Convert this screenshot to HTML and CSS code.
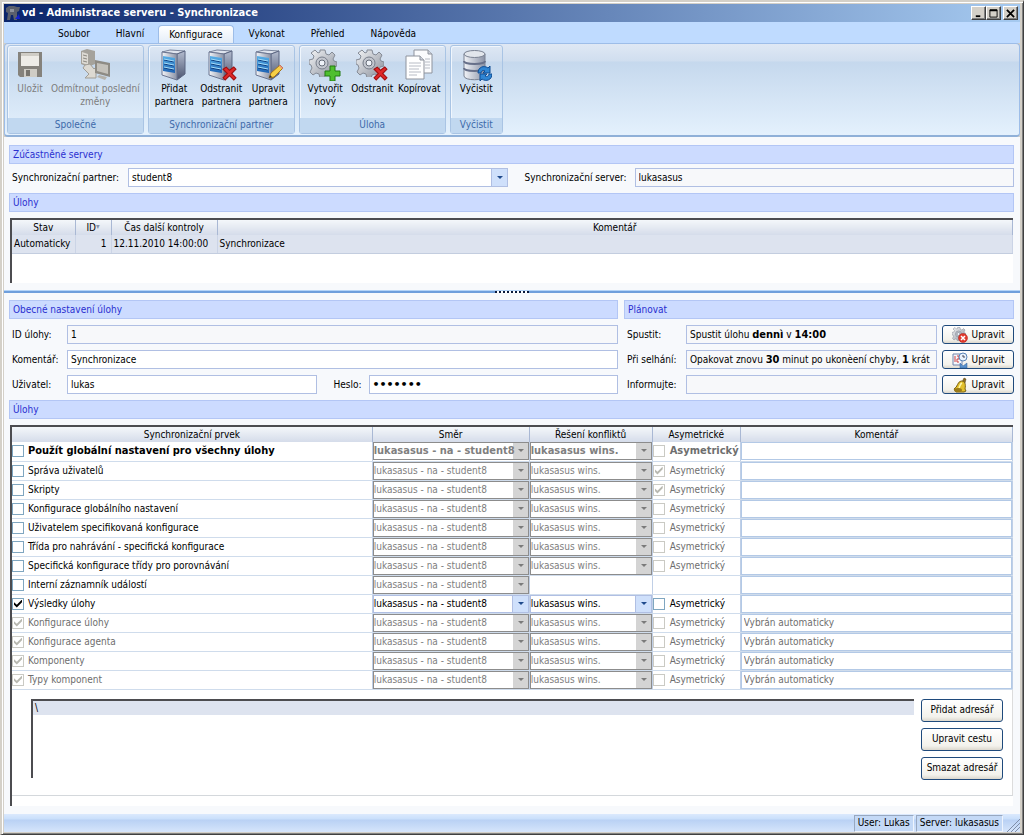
FILE: index.html
```html
<!DOCTYPE html>
<html lang="cs">
<head>
<meta charset="utf-8">
<title>vd - Administrace serveru - Synchronizace</title>
<link rel="stylesheet" href="styles.css">
</head>
<body>
<svg class="defs" aria-hidden="true">
  <defs>
    <linearGradient id="g-metal" x1="0" y1="0" x2="1" y2="0"><stop offset="0" stop-color="#f2f4f8"/><stop offset="1" stop-color="#8a92a6"/></linearGradient>
    <linearGradient id="g-blue" x1="0" y1="0" x2="0" y2="1"><stop offset="0" stop-color="#58b0e8"/><stop offset="1" stop-color="#1c62b4"/></linearGradient>
    <linearGradient id="g-side" x1="0" y1="0" x2="0" y2="1"><stop offset="0" stop-color="#b4bccf"/><stop offset="1" stop-color="#4a5470"/></linearGradient>
    <linearGradient id="g-gear" x1="0" y1="0" x2="1" y2="1"><stop offset="0" stop-color="#f4f5f7"/><stop offset="1" stop-color="#868c98"/></linearGradient>
    <symbol id="server" viewBox="0 0 32 32">
      <path d="M4 3 12 1 27 2 19 5z" fill="#dfe4ee" stroke="#7a849c"/>
      <path d="M19 5 27 2V25L19 31z" fill="url(#g-side)" stroke="#5a6480"/>
      <path d="M4 3 19 5V31L4 26z" fill="url(#g-metal)" stroke="#6b7590"/>
      <path d="M5 7 17 9V24L5 22z" fill="url(#g-blue)"/>
      <path d="M6 11 16 13M6 15 16 17M6 19 16 21" stroke="#123f80"/>
      <path d="M6 10 16 12M6 14 16 16M6 18 16 20" stroke="#a4dcf8"/>
    </symbol>
    <symbol id="cross" viewBox="0 0 14 14"><path d="M1 3 4 1 7 4 11 1 13 3 9 7 13 11 11 13 7 9 3 13 1 11 5 7z" fill="#e02828" stroke="#a01010"/></symbol>
    <symbol id="gear" viewBox="0 0 28 28">
      <path d="M11 1h5l1 4 3 1 3-3 3 3-2 4 1 2 3 1v4l-4 1-1 3 3 3-4 3-3-2-3 1-1 3H11l-1-4-3-1-3 2-3-3 2-4-1-3-2-1v-4l4-1 1-3-3-3 4-3 3 3 2-1z" fill="url(#g-gear)" stroke="#858b96"/>
      <circle cx="13" cy="14" r="6" fill="#c3c7cf" stroke="#777d8a"/>
      <circle cx="13" cy="14" r="3" fill="#eef2f8" stroke="#666c78"/>
    </symbol>
  </defs>
</svg>

<div class="window">
  <header class="titlebar">
    <svg class="app-icon" viewBox="0 0 16 16" aria-hidden="true"><path d="M1 3 4 1H9l3 1h3l-1 4-2 1v8H9l-1-5H6l-1 5H2L3 8 1 7z" fill="#5a5f6c"/><path d="M5 4h4v3H5z" fill="#8d929c"/><path d="M10 14 14 9 15 14z" fill="#1420d0"/></svg>
    <h1>vd - Administrace serveru - Synchronizace</h1>
    <div class="window-buttons">
      <button type="button" aria-label="Minimalizovat"><svg viewBox="0 0 10 10"><path d="M2 8h5" stroke="#000" stroke-width="2"/></svg></button>
      <button type="button" aria-label="Maximalizovat"><svg viewBox="0 0 10 10"><path d="M1 1h8v8H1z" fill="none" stroke="#000" stroke-width="1"/><path d="M1 1.500h8" stroke="#000" stroke-width="2"/></svg></button>
      <button type="button" class="close" aria-label="Zavřít"><svg viewBox="0 0 10 10"><path d="M1 1 9 9M9 1 1 9" stroke="#000" stroke-width="2"/></svg></button>
    </div>
  </header>

  <nav class="tabs">
    <button type="button">Soubor</button>
    <button type="button">Hlavní</button>
    <button type="button" class="active">Konfigurace</button>
    <button type="button">Vykonat</button>
    <button type="button">Přehled</button>
    <button type="button">Nápověda</button>
  </nav>

  <div class="ribbon">
    <section class="group wide">
      <div class="tools">
        <button type="button" disabled>
          <svg viewBox="0 0 32 32"><path d="M4 3h24v25H6l-2-2z" fill="#85827c"/><path d="M7 4h18v13H7z" fill="#eeece7"/><path d="M7 4h18v3H7z" fill="#d0cdc6"/><path d="M10 20h13v8H10z" fill="#cfccc5"/><path d="M12 21h4v6h-4z" fill="#77746e"/></svg>
          Uložit</button>
        <button type="button" disabled>
          <svg viewBox="0 0 32 32"><path d="M2 2 8 0 16 2V15L9 18 2 15z" fill="#a5a29b"/><path d="M3 3 9 5V16L3 14z" fill="#dddad3"/><path d="M4 6l4 1M4 9l4 1M4 12l4 1" stroke="#8c8982"/><path d="M6 16 11 15 15 20 17 18V29L6 29 10 25 4 19z" fill="#dcd9d2" stroke="#a09d96"/><path d="M16 11 31 14V28L16 24z" fill="#8e8b84"/><path d="M18 14 29 16V25L18 22z" fill="#c4c1ba"/><path d="M20 26l8 2-2 3-8-3z" fill="#b5b2ab"/></svg>
          Odmítnout poslední<br>změny</button>
      </div>
      <h2>Společné</h2>
    </section>
    <section class="group">
      <div class="tools">
        <button type="button"><svg viewBox="0 0 32 32"><use href="#server"/></svg>Přidat<br>partnera</button>
        <button type="button"><svg viewBox="0 0 32 32"><use href="#server"/><use href="#cross" x="17" y="17" width="15" height="15"/></svg>Odstranit<br>partnera</button>
        <button type="button"><svg viewBox="0 0 32 32"><use href="#server"/><path d="M17 29 19 24 28 16 31 19 22 28z" fill="#f6cf45" stroke="#a4731c"/><path d="M28 16 31 19 30 20 27 17z" fill="#e88c8c"/><path d="M17 29l1-3 2 2z" fill="#333"/></svg>Upravit<br>partnera</button>
      </div>
      <h2>Synchronizační partner</h2>
    </section>
    <section class="group">
      <div class="tools">
        <button type="button"><svg viewBox="0 0 32 32"><use href="#gear" width="28" height="28"/><path d="M21 17h5v5h5v5h-5v5h-5v-5h-5v-5h5z" fill="#4fbf2e" stroke="#237a10"/></svg>Vytvořit<br>nový</button>
        <button type="button"><svg viewBox="0 0 32 32"><use href="#gear" width="28" height="28"/><use href="#cross" x="17" y="17" width="15" height="15"/></svg>Odstranit</button>
        <button type="button"><svg viewBox="0 0 32 32"><path d="M11 1H25L29 5V24H11z" fill="#fafbfd" stroke="#8e939d"/><path d="M25 1v4h4" fill="#cdd2dc" stroke="#8e939d"/><path d="M22 10h5M22 13h5M22 16h5M22 19h5" stroke="#b8bcc5"/><path d="M3 7H17L21 11V30H3z" fill="#fff" stroke="#8e939d"/><path d="M17 7v4h4" fill="#cdd2dc" stroke="#8e939d"/><path d="M6 14h12M6 17h12M6 20h10M6 23h12M6 26h8" stroke="#b8bcc5"/></svg>Kopírovat</button>
      </div>
      <h2>Úloha</h2>
    </section>
    <section class="group">
      <div class="tools">
        <button type="button"><svg viewBox="0 0 32 32"><path d="M4 5v22c0 5 21 5 21 0V5z" fill="url(#g-metal)" stroke="#7a8292"/><ellipse cx="14.500" cy="5" rx="10.500" ry="3.500" fill="#e2e6ec" stroke="#7a8292"/><path d="M4 12c0 4 21 4 21 0M4 19c0 4 21 4 21 0" fill="none" stroke="#67708a" stroke-width="2"/><path d="M18 24c0-6 6-8 10-5l2-2v7h-7l2-2c-2-1-4 0-4 2zM32 25c0 6-6 8-10 5l-2 2v-7h7l-2 2c2 1 4 0 4-2z" fill="#2f86d4" stroke="#0f4c94"/></svg>Vyčistit</button>
      </div>
      <h2>Vyčistit</h2>
    </section>
  </div>

  <main>
    <section class="pane top-pane">
      <h3 class="bar">Zúčastněné servery</h3>
      <div class="servers">
        <label for="partner">Synchronizační partner:</label>
        <span class="combo"><select id="partner"><option>student8</option></select></span>
        <label for="server-name" class="second">Synchronizační server:</label>
        <input id="server-name" type="text" readonly value="lukasasus">
      </div>
      <h3 class="bar">Úlohy</h3>
      <div class="sunken jobs">
        <table>
          <colgroup><col class="c-state"><col class="c-id"><col class="c-time"><col></colgroup>
          <thead><tr><th>Stav</th><th>ID<span class="sort">▾</span></th><th>Čas další kontroly</th><th>Komentář</th></tr></thead>
          <tbody><tr><td>Automaticky</td><td class="num">1</td><td>12.11.2010 14:00:00</td><td>Synchronizace</td></tr></tbody>
        </table>
      </div>
    </section>

    <div class="splitter"><span></span></div>

    <section class="pane bottom-pane">
      <div class="halves">
        <div>
          <h3 class="bar">Obecné nastavení úlohy</h3>
          <div class="general">
            <label for="job-id">ID úlohy:</label><input id="job-id" class="span" type="text" readonly value="1">
            <label for="comment">Komentář:</label><input id="comment" class="span" type="text" value="Synchronizace">
            <label for="user">Uživatel:</label><input id="user" type="text" value="lukas">
            <label for="password" class="pw">Heslo:</label><input id="password" type="password" value="heslo12">
          </div>
        </div>
        <div>
          <h3 class="bar">Plánovat</h3>
          <div class="plan">
            <label for="run">Spustit:</label><output id="run">Spustit úlohu <b>dennì</b> v <b>14:00</b></output>
            <button type="button" class="push"><svg viewBox="0 0 16 16"><use href="#gear" width="14" height="14"/><circle cx="11" cy="11" r="4.500" fill="#e23a2e" stroke="#a81a12" stroke-width=".5"/><path d="M9 9l4 4M13 9l-4 4" stroke="#fff" stroke-width="1.500"/></svg>Upravit</button>
            <label for="fail">Při selhání:</label><output id="fail">Opakovat znovu <b>30</b> minut po ukonèení chyby, <b>1</b> krát</output>
            <button type="button" class="push"><svg viewBox="0 0 16 16"><path d="M1 2h9v11H1z" fill="#f4f6fb" stroke="#7084ac"/><path d="M3 4v6M5 4h2v3H5v3h2" fill="none" stroke="#d04040"/><circle cx="11" cy="5" r="4" fill="#e8f2fc" stroke="#5a84b8"/><path d="M11 3v2h2" fill="none" stroke="#445"/><path d="M8 11l3 3 4-3v5H8z" fill="#5b92cc" stroke="#2f5f9c" stroke-width=".5"/></svg>Upravit</button>
            <label for="inform">Informujte:</label><output id="inform"></output>
            <button type="button" class="push"><svg viewBox="0 0 16 16"><path d="M10 5 12 1l2 1-1 4z" fill="#8a6a20" stroke="#4e3c10" stroke-width=".5"/><path d="M2 12C6 10 5 5 9 4c4 0 5 3 4 8l1 2-2 1H4z" fill="#e2c02c" stroke="#7a6010"/><path d="M7 11c1-2 1-4 3-5" fill="none" stroke="#fff6a8" stroke-width="1.500"/><ellipse cx="6" cy="13" rx="4" ry="2" fill="#9a7a18"/></svg>Upravit</button>
          </div>
        </div>
      </div>

      <h3 class="bar">Úlohy</h3>
      <div class="sunken tasks">
        <table>
          <colgroup><col class="c-item"><col class="c-dir"><col class="c-conf"><col class="c-asym"><col></colgroup>
          <thead><tr><th>Synchronizační prvek</th><th>Směr</th><th>Řešení konfliktů</th><th>Asymetrické</th><th>Komentář</th></tr></thead>
          <tbody>
            <tr class="strong"><td><label><input type="checkbox">Použít globální nastavení pro všechny úlohy</label></td><td><span class="combo"><select disabled aria-label="Směr"><option>lukasasus - na - student8</option></select></span></td><td><span class="combo"><select disabled aria-label="Řešení"><option>lukasasus wins.</option></select></span></td><td><label class="off"><input type="checkbox" disabled>Asymetrický</label></td><td><input type="text" aria-label="Komentář"></td></tr>
            <tr><td><label><input type="checkbox">Správa uživatelů</label></td><td><span class="combo"><select disabled aria-label="Směr"><option>lukasasus - na - student8</option></select></span></td><td><span class="combo"><select disabled aria-label="Řešení"><option>lukasasus wins.</option></select></span></td><td><label class="off"><input type="checkbox" disabled checked>Asymetrický</label></td><td><input type="text" aria-label="Komentář"></td></tr>
            <tr><td><label><input type="checkbox">Skripty</label></td><td><span class="combo"><select disabled aria-label="Směr"><option>lukasasus - na - student8</option></select></span></td><td><span class="combo"><select disabled aria-label="Řešení"><option>lukasasus wins.</option></select></span></td><td><label class="off"><input type="checkbox" disabled checked>Asymetrický</label></td><td><input type="text" aria-label="Komentář"></td></tr>
            <tr><td><label><input type="checkbox">Konfigurace globálního nastavení</label></td><td><span class="combo"><select disabled aria-label="Směr"><option>lukasasus - na - student8</option></select></span></td><td><span class="combo"><select disabled aria-label="Řešení"><option>lukasasus wins.</option></select></span></td><td><label class="off"><input type="checkbox" disabled>Asymetrický</label></td><td><input type="text" aria-label="Komentář"></td></tr>
            <tr><td><label><input type="checkbox">Uživatelem specifikovaná konfigurace</label></td><td><span class="combo"><select disabled aria-label="Směr"><option>lukasasus - na - student8</option></select></span></td><td><span class="combo"><select disabled aria-label="Řešení"><option>lukasasus wins.</option></select></span></td><td><label class="off"><input type="checkbox" disabled>Asymetrický</label></td><td><input type="text" aria-label="Komentář"></td></tr>
            <tr><td><label><input type="checkbox">Třída pro nahrávání - specifická konfigurace</label></td><td><span class="combo"><select disabled aria-label="Směr"><option>lukasasus - na - student8</option></select></span></td><td><span class="combo"><select disabled aria-label="Řešení"><option>lukasasus wins.</option></select></span></td><td><label class="off"><input type="checkbox" disabled>Asymetrický</label></td><td><input type="text" aria-label="Komentář"></td></tr>
            <tr><td><label><input type="checkbox">Specifická konfigurace třídy pro porovnávání</label></td><td><span class="combo"><select disabled aria-label="Směr"><option>lukasasus - na - student8</option></select></span></td><td><span class="combo"><select disabled aria-label="Řešení"><option>lukasasus wins.</option></select></span></td><td><label class="off"><input type="checkbox" disabled>Asymetrický</label></td><td><input type="text" aria-label="Komentář"></td></tr>
            <tr><td><label><input type="checkbox">Interní záznamník událostí</label></td><td><span class="combo"><select disabled aria-label="Směr"><option>lukasasus - na - student8</option></select></span></td><td></td><td></td><td><input type="text" aria-label="Komentář"></td></tr>
            <tr><td><label><input type="checkbox" checked>Výsledky úlohy</label></td><td><span class="combo"><select aria-label="Směr"><option>lukasasus - na - student8</option></select></span></td><td><span class="combo"><select aria-label="Řešení"><option>lukasasus wins.</option></select></span></td><td><label><input type="checkbox">Asymetrický</label></td><td><input type="text" aria-label="Komentář"></td></tr>
            <tr class="auto"><td><label><input type="checkbox" disabled checked>Konfigurace úlohy</label></td><td><span class="combo"><select disabled aria-label="Směr"><option>lukasasus - na - student8</option></select></span></td><td><span class="combo"><select disabled aria-label="Řešení"><option>lukasasus wins.</option></select></span></td><td><label><input type="checkbox" disabled>Asymetrický</label></td><td><input type="text" aria-label="Komentář" value="Vybrán automaticky"></td></tr>
            <tr class="auto"><td><label><input type="checkbox" disabled checked>Konfigurace agenta</label></td><td><span class="combo"><select disabled aria-label="Směr"><option>lukasasus - na - student8</option></select></span></td><td><span class="combo"><select disabled aria-label="Řešení"><option>lukasasus wins.</option></select></span></td><td><label><input type="checkbox" disabled>Asymetrický</label></td><td><input type="text" aria-label="Komentář" value="Vybrán automaticky"></td></tr>
            <tr class="auto"><td><label><input type="checkbox" disabled checked>Komponenty</label></td><td><span class="combo"><select disabled aria-label="Směr"><option>lukasasus - na - student8</option></select></span></td><td><span class="combo"><select disabled aria-label="Řešení"><option>lukasasus wins.</option></select></span></td><td><label><input type="checkbox" disabled>Asymetrický</label></td><td><input type="text" aria-label="Komentář" value="Vybrán automaticky"></td></tr>
            <tr class="auto"><td><label><input type="checkbox" disabled checked>Typy komponent</label></td><td><span class="combo"><select disabled aria-label="Směr"><option>lukasasus - na - student8</option></select></span></td><td><span class="combo"><select disabled aria-label="Řešení"><option>lukasasus wins.</option></select></span></td><td><label><input type="checkbox" disabled>Asymetrický</label></td><td><input type="text" aria-label="Komentář" value="Vybrán automaticky"></td></tr>
          </tbody>
        </table>
        <div class="paths">
          <ul class="path-list"><li>\</li></ul>
          <div class="path-buttons">
            <button type="button" class="push">Přidat adresář</button>
            <button type="button" class="push">Upravit cestu</button>
            <button type="button" class="push">Smazat adresář</button>
          </div>
        </div>
      </div>
    </section>
  </main>

  <footer class="statusbar">
    <span>User: Lukas</span><span>Server: lukasasus</span>
    <svg viewBox="0 0 14 14" aria-hidden="true"><path d="M1 14 14 1M5 14 14 5M9 14 14 9" stroke="#7f8ea8" stroke-width="1"/></svg>
  </footer>
</div>
</body>
</html>
```
FILE: styles.css
```css
* { box-sizing: border-box; }

body {
  margin: 0;
  font: 10px/14px "DejaVu Sans Condensed", "Noto Sans", sans-serif;
  color: #000;
}

button, input, select, output { font: inherit; color: inherit; }
h1, h2, h3, ul { margin: 0; padding: 0; font: inherit; }
.defs { position: absolute; width: 0; height: 0; }

b, .strong, .titlebar h1 { font-size: 11px; font-weight: bold; }

.window {
  display: flex;
  flex-direction: column;
  min-height: 100vh;
  padding: 2px 3px 2px 2px;
  background: #d4d0c8;
  border: 1px solid #d4d0c8;
  border-right-color: #404040;
  border-bottom-color: #404040;
  box-shadow: inset 1px 1px #fff, inset -1px -1px #808080;
  border-left-width: 2px;
  border-top-width: 2px;
}

/* Title bar */
.titlebar {
  display: flex;
  align-items: center;
  height: 18px;
  padding: 0 2px 0 1px;
  background: linear-gradient(90deg, #0a246a, #a6caf0);
  color: #fff;
}
.app-icon { width: 16px; height: 16px; }
.titlebar h1 { flex: 1; margin-left: 1px; }
.window-buttons { display: flex; }
.window-buttons button {
  display: grid;
  place-items: center;
  width: 15px;
  height: 14px;
  padding: 0;
  background: #d4d0c8;
  border: 1px solid;
  border-color: #fff #404040 #404040 #fff;
  box-shadow: inset -1px -1px #808080;
}
.window-buttons .close { margin-left: 2px; }
.window-buttons svg { width: 9px; height: 9px; }

/* Ribbon */
.tabs {
  display: flex;
  align-items: flex-end;
  height: 21px;
  padding-left: 41px;
  background: #bfdbff;
}
.tabs button {
  height: 18px;
  padding: 0 12px;
  background: none;
  border: 1px solid transparent;
  border-radius: 4px 4px 0 0;
}
.tabs .active {
  margin: 0 2px 0 1px;
  padding: 0 10px;
  background: linear-gradient(#fff, #e4edf8);
  border-color: #9dbde8;
  border-bottom: 0;
}

.ribbon {
  display: flex;
  gap: 4px;
  padding: 1px 2px;
  background: linear-gradient(#dfe8f4, #d0deef 17px, #c5d8ed 18px, #e4f1fd);
  border: 1px solid #9dbde8;
  border-bottom: 2px solid #8fb0d8;
  border-radius: 4px;
}
.group {
  display: flex;
  flex-direction: column;
  border: 1px solid #a9c4e4;
  border-radius: 3px;
  box-shadow: inset 1px 1px #f0f6fd;
}
.group h2 {
  height: 15px;
  background: #c1d8f0;
  color: #3e6aaa;
  text-align: center;
}
.tools {
  display: flex;
  align-items: flex-start;
  height: 72px;
  padding: 3px 2px 0;
}
.tools button {
  padding: 0 1px;
  min-width: 47px;
  background: none;
  border: 0;
  line-height: 13px;
}
.tools button:disabled { color: #7d7d7d; }
.tools svg { display: block; width: 32px; height: 32px; margin: 0 auto 1px; }
.wide .tools button:first-child { min-width: 40px; }

/* Content */
main {
  flex: 1;
  display: flex;
  flex-direction: column;
  background: #f7f9fc;
}
.pane { display: flex; flex-direction: column; padding: 0 6px 0 5px; }
.top-pane { padding-top: 8px; }
.bottom-pane { flex: 1; padding-top: 7px; padding-bottom: 8px; }

.bar {
  height: 19px;
  padding: 1px 3px;
  line-height: 16px;
  background: #ccdbff;
  border: 1px solid #b3c6f5;
  color: #2a2fd0;
}

input[type="text"], input[type="password"], output, .combo select {
  display: block;
  width: 100%;
  min-width: 0;
  height: 19px;
  margin: 0;
  padding: 0 3px;
  background: #fff;
  border: 1px solid #b0bfe3;
  border-radius: 0;
  outline: 0;
  line-height: 17px;
  white-space: nowrap;
  overflow: hidden;
}
input[readonly], output { background: #f7f8fa !important; }
input[type="password"] { font-family: "DejaVu Sans", sans-serif; font-size: 11px; font-weight: bold; }

.combo { position: relative; display: block; width: 100%; min-width: 0; }
.combo select {
  appearance: none;
  opacity: 1;
  background: linear-gradient(90deg, #b0bfe3 1px, #cfe0fb 1px) right / 16px 100% no-repeat #fff;
}
.combo::after {
  content: "";
  position: absolute;
  right: 5px;
  top: 8px;
  border: 3px solid transparent;
  border-top-color: #1f4a8c;
  border-bottom: 0;
  pointer-events: none;
}

.servers {
  display: grid;
  grid-template-columns: 116px 1fr 127px 1fr;
  align-items: center;
  margin: 4px 0 6px;
  padding-left: 3px;
}
.servers .second { padding-left: 17px; }
.servers label, .general label, .plan label { white-space: nowrap; }

.sunken {
  margin: 6px 1px 0;
  background: #fff;
  border-top: 2px solid #4c4c50;
  border-left: 2px solid #4c4c50;
}
.jobs { height: 65px; }

table { width: 100%; table-layout: fixed; border-collapse: collapse; }
th {
  padding: 0;
  height: 15px;
  font-weight: normal;
  background: linear-gradient(#f4f7fa, #d5dcea);
  border-right: 1px solid #a9b8d4;
}
td { padding: 0 2px; white-space: nowrap; }
.jobs td { height: 18px; background: #dde3ef; border-right: 1px solid #cbd4e6; border-bottom: 1px solid #c3cddf; }
.jobs .num { text-align: right; padding-right: 4px; }
.sort { color: #8a93a6; font-size: 8px; vertical-align: 2px; line-height: 1px; }
.c-state { width: 63px; }
.c-id { width: 36px; }
.c-time { width: 106px; }

.splitter {
  display: flex;
  justify-content: center;
  align-items: center;
  height: 3px;
  margin-top: 7px;
  background: #6f9fdc;
  border-top: 1px solid #b4d4f8;
}
.splitter span { width: 34px; height: 2px; background: repeating-linear-gradient(90deg, #0a1a3c 0 2px, #fff 2px 4px); }

/* Job details */
.halves {
  display: grid;
  grid-template-columns: minmax(0, 609fr) minmax(0, 390fr);
  gap: 6px;
  margin-bottom: 6px;
}
.general, .plan {
  display: grid;
  align-items: center;
  gap: 6px 0;
  margin-top: 6px;
  padding-left: 3px;
}
.general { grid-template-columns: 55px 1fr 52px 1fr; }
.general .span { grid-column: 2 / -1; }
.general .pw { padding-left: 17px; }
.plan { grid-template-columns: 59px minmax(0, 1fr) 77px; }

.push {
  display: flex;
  align-items: center;
  justify-content: center;
  gap: 4px;
  padding: 0;
  background: linear-gradient(#fff, #f3f2ec 80%, #dcd8ce);
  border: 1px solid #1f4a7c;
  border-radius: 3px;
  white-space: nowrap;
}
.plan .push { height: 19px; margin-left: 5px; }
.push svg { width: 16px; height: 16px; }

/* Task table */
.tasks { flex: 1; }
.tasks tbody tr { height: 19px; }
.tasks td { height: 19px; padding: 0; border-right: 1px solid #c0cfe6; border-bottom: 1px solid #cfdcec; }
.tasks .combo select, .tasks td input[type="text"] { height: 18px; line-height: 16px; }
.tasks .combo select { padding: 0; }
.tasks .combo::after { top: 7px; }
.tasks td input[type="text"] { padding: 0 2px; border-color: #b3c9e6; }
.tasks .combo select:disabled {
  color: #808080;
  border-color: #8c8c8c;
  background: linear-gradient(#d4d4d4, #d4d4d4) right / 15px 100% no-repeat #fff;
}
.combo:has(:disabled)::after { border-top-color: #7a7a7a; }
.tasks td label { display: flex; align-items: center; gap: 4px; }
.tasks td + td label { gap: 5px; }
.tasks .off, .auto { color: #6e6e6e; }
.c-item { width: 36%; }
.c-dir { width: 157px; }
.c-conf { width: 123px; }
.c-asym { width: 88px; }

input[type="checkbox"] {
  appearance: none;
  display: grid;
  place-items: center;
  flex: none;
  width: 12px;
  height: 12px;
  margin: 0;
  background: #fff;
  border: 1px solid #7fa6c0;
}
input[type="checkbox"]:checked::before {
  content: "";
  width: 8px;
  height: 8px;
  background: #000;
  clip-path: polygon(0 35%, 35% 65%, 100% 0, 100% 35%, 35% 100%, 0 65%);
}
input[type="checkbox"]:disabled { border-color: #cacac4; }
input[type="checkbox"]:disabled::before { background: #b8b8b0; }

.paths {
  display: flex;
  align-items: flex-start;
  gap: 7px;
  padding: 9px 9px 15px 19px;
  border-right: 1px solid #dcdcdc;
  border-bottom: 1px solid #d4d8dc;
}
.path-list {
  flex: 1;
  height: 79px;
  list-style: none;
  border-top: 2px solid #4c4c50;
  border-left: 2px solid #4c4c50;
}
.path-list li { padding-left: 2px; background: #dde3ef; }
.path-buttons { display: grid; gap: 6px; width: 82px; }
.path-buttons .push { height: 23px; }

/* Status bar */
.statusbar {
  display: flex;
  justify-content: flex-end;
  gap: 2px;
  height: 18px;
  padding-top: 1px;
  background: linear-gradient(#dbe9fd, #c9dffb 5px, #b9d1f4 6px, #d6e5fb);
}
.statusbar span {
  padding: 0 3px;
  background: #c4d9f6;
  border: 1px solid;
  border-color: #98a8c0 #eef4fd #eef4fd #98a8c0;
}
.statusbar svg { align-self: flex-end; width: 14px; height: 14px; margin-left: 1px; }
```
